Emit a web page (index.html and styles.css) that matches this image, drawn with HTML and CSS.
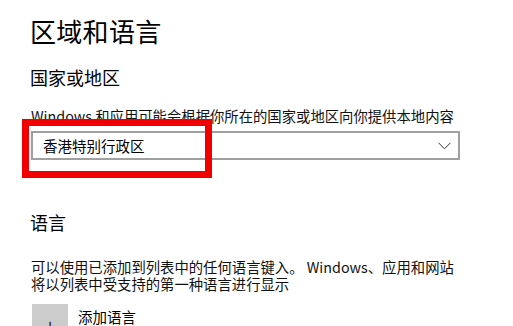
FILE: index.html
```html
<!DOCTYPE html>
<html lang="zh-CN">
<head>
    <meta charset="UTF-8">
    <meta name="viewport" content="width=device-width, initial-scale=1.0">
    <title>区域和语言</title>
    <link rel="stylesheet" href="styles.css">
</head>
<body>
    <div class="page">
        <h1 class="title">区域和语言</h1>

        <h2 class="subtitle">国家或地区</h2>
        <p class="desc">Windows 和应用可能会根据你所在的国家或地区向你提供本地内容</p>
        <div class="select">
            <span class="select-text">香港特别行政区</span>
            <svg class="chevron" width="13" height="8" viewBox="0 0 13 8">
                <path d="M0.5 0.8 L6.5 6.8 L12.5 0.8" fill="none" stroke="#333" stroke-width="1"/>
            </svg>
            <div class="mark"></div>
        </div>

        <h2 class="subtitle lang">语言</h2>
        <p class="desc para">可以使用已添加到列表中的任何语言键入。 Windows、应用和网站<br>将以列表中受支持的第一种语言进行显示</p>

        <div class="add">
            <div class="add-icon">+</div>
            <span class="add-text">添加语言</span>
        </div>
    </div>
</body>
</html>
```

FILE: styles.css
```css
*{
    margin: 0;
    padding: 0;
}
html,body{
    width: 100%;
    height: 100%;
    background: #fff;
    overflow: hidden;
}
body{
    font-family: "Noto Sans CJK SC", "Noto Sans", sans-serif;
    color: #000;
}
.page{
    padding: 13px 0 0 30px;
}
.title{
    font-size: 26px;
    font-weight: normal;
    line-height: 36px;
    letter-spacing: 0.3px;
}
.subtitle{
    margin-top: 15px;
    font-size: 18px;
    font-weight: normal;
    line-height: 26px;
}
.desc{
    margin-top: 16px;
    font-size: 14.35px;
    line-height: 20px;
    color: #111;
    padding-left: 1px;
}
.select{
    position: relative;
    display: flex;
    align-items: center;
    justify-content: space-between;
    margin-top: 5px;
    margin-left: 1px;
    height: 25px;
    border: 2px solid #a0a0a0;
    padding: 0 7px 0 10px;
    width: 408px;
}
.select-text{
    font-size: 14.5px;
    line-height: 25px;
}
.chevron{
    display: block;
}
.mark{
    position: absolute;
    left: -11px;
    top: -14px;
    width: 176px;
    height: 45px;
    border: 7px solid #f20000;
}
.lang{
    margin-top: 49px;
}
.para{
    margin-top: 23px;
    line-height: 17px;
}
.add{
    display: flex;
    align-items: flex-start;
    margin-top: 12px;
    padding-left: 2px;
}
.add-icon{
    width: 36px;
    height: 36px;
    background: #ccc;
    text-align: center;
    font-size: 20px;
    line-height: 44px;
    color: #333;
}
.add-text{
    margin-left: 10px;
    margin-top: 3px;
    font-size: 14.5px;
    line-height: 20px;
}
```
